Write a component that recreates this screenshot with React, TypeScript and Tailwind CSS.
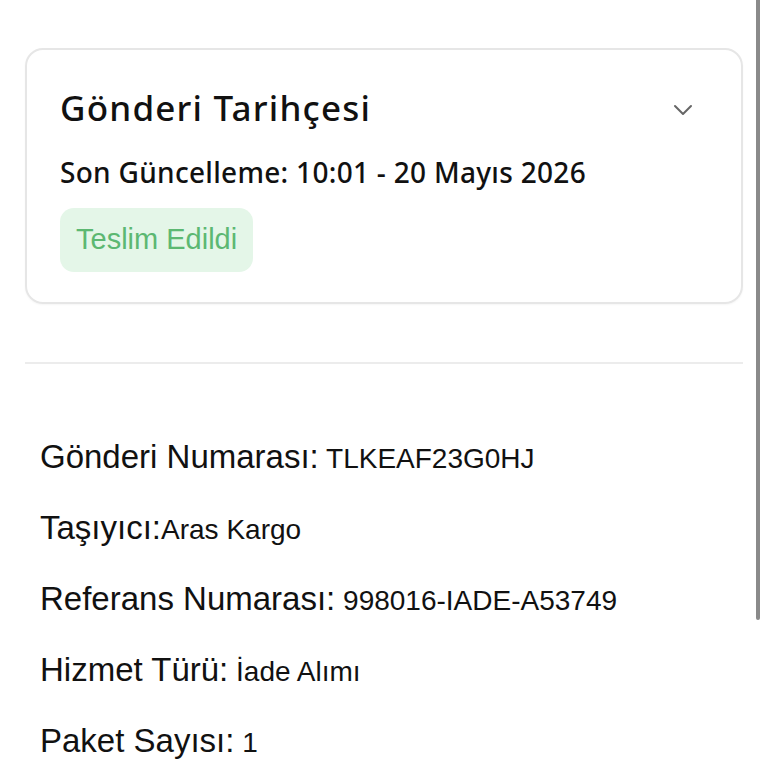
import React from 'react';

const rows = [
  { label: 'Gönderi Numarası:', value: ' TLKEAF23G0HJ' },
  { label: 'Taşıyıcı:', value: 'Aras Kargo' },
  { label: 'Referans Numarası:', value: ' 998016-IADE-A53749' },
  { label: 'Hizmet Türü:', value: ' İade Alımı' },
  { label: 'Paket Sayısı:', value: ' 1' },
];

export default function App() {
  return (
    <div className="relative h-[768px] w-[768px] overflow-hidden bg-white">
      {/* scrollbar */}
      <div className="absolute right-[8px] top-0 h-[620px] w-[4px] rounded-b-full bg-[#8a8a8a]" />

      <div className="pl-[25px] pr-[25px] pt-[48px]">
        {/* Shipment history card */}
        <div className="flex h-[256px] flex-col rounded-[18px] border-2 border-[#e6e6e6] px-[33px] pt-[36px] shadow-[0_1px_2px_rgba(0,0,0,0.04)]">
          <div className="flex items-center justify-between">
            <h2 className="font-['Noto_Sans',sans-serif] text-[35px] leading-[44px] font-medium tracking-[1.2px] text-[#111]">
              Gönderi Tarihçesi
            </h2>
            <svg
              width="20"
              height="14"
              viewBox="0 0 20 14"
              fill="none"
              stroke="#666"
              strokeWidth="2"
              strokeLinecap="round"
              strokeLinejoin="round"
              className="mr-[15px] mt-[4px]"
            >
              <path d="M2 3l8 8 8-8" />
            </svg>
          </div>
          <p className="mt-[25px] font-['Noto_Sans',sans-serif] text-[28px] leading-[34px] font-medium tracking-[0.3px] text-[#111]">
            Son Güncelleme: 10:01 - 20 Mayıs 2026
          </p>
          <div className="mt-[19px]">
            <span className="inline-flex h-[64px] items-center rounded-[14px] bg-[#e4f6e8] px-[16px] font-['Liberation_Sans',sans-serif] text-[29px] text-[#5cb872]">
              Teslim Edildi
            </span>
          </div>
        </div>

        {/* divider */}
        <div className="mt-[58px] h-[2px] bg-[#ececec]" />

        {/* details */}
        <div className="mt-[73px] flex flex-col gap-[29px] pl-[15px]">
          {rows.map((row) => (
            <div
              key={row.label}
              className="flex items-baseline font-['Liberation_Sans',sans-serif] leading-[40px] text-[#111] whitespace-pre"
            >
              <span className="text-[33px]">{row.label}</span>
              <span className="text-[28px]">{row.value}</span>
            </div>
          ))}
        </div>
      </div>
    </div>
  );
}
